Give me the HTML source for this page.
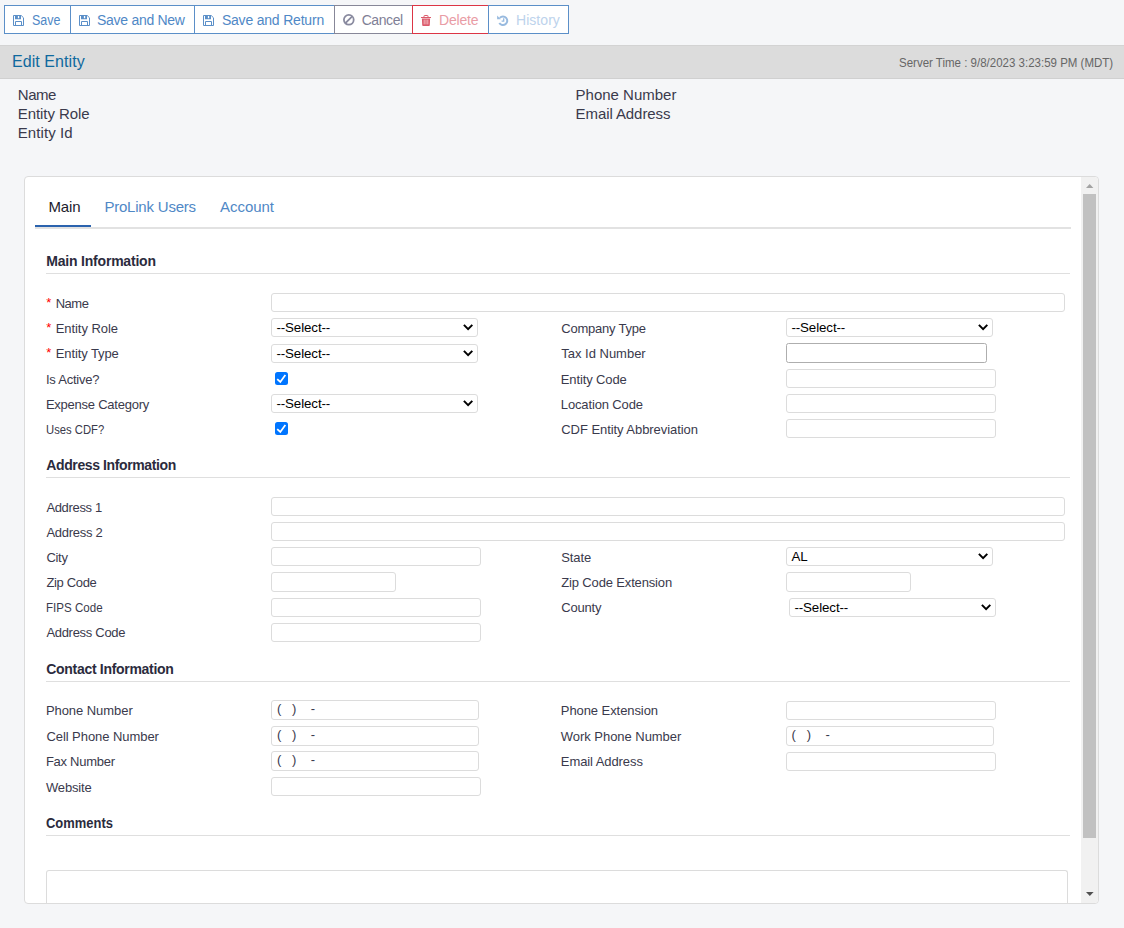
<!DOCTYPE html>
<html><head><meta charset="utf-8"><title>Edit Entity</title>
<style>
html,body{margin:0;padding:0}
body{width:1124px;height:928px;position:relative;overflow:hidden;background:#f5f6f8;font-family:"Liberation Sans",sans-serif;}
.t{position:absolute;white-space:pre;font-family:"Liberation Sans",sans-serif;}
.abs{position:absolute;box-sizing:border-box;}
.btn{position:absolute;top:5px;height:29px;box-sizing:border-box;background:#fff;border:1px solid #5b8fc8;}
.bar{position:absolute;left:0;top:45px;width:1124px;height:34px;background:#dcdcdc;border-bottom:1px solid #d0d0d0;border-top:1px solid #d3d3d3;box-sizing:border-box;}
.panel{position:absolute;left:24px;top:176px;width:1075px;height:728px;box-sizing:border-box;background:#fff;border:1px solid #dcdcdc;border-radius:4px;overflow:hidden;}
.in{position:absolute;box-sizing:border-box;background:#fff;border:1px solid #dcdcdc;border-radius:3px;}
.hr{position:absolute;left:46px;width:1024px;height:1px;background:#dfdfdf;}
div.sel{position:absolute;box-sizing:border-box;height:19px;width:207px;background:#fff;border:1px solid #dcdcdc;border-radius:3px;}
div.sel span{position:absolute;left:4.4px;top:0.6px;font-size:13.333px;line-height:16px;color:#000;white-space:pre;letter-spacing:-0.1px;}
div.cb{position:absolute;width:13px;height:13px;background:#0075ff;border-radius:2.5px;}
.ph{position:absolute;white-space:pre;font-size:13px;line-height:17px;color:#3a3a4c;}
svg{position:absolute;overflow:visible}

</style></head>
<body>
<!-- toolbar -->
<div class="btn" style="left:4px;width:67px"></div>
<div class="btn" style="left:70px;width:125px"></div>
<div class="btn" style="left:194px;width:141px"></div>
<div class="btn" style="left:334px;width:79px;border-color:#878798"></div>
<div class="btn" style="left:412px;width:77px;border-color:#dc3545"></div>
<div class="btn" style="left:488px;width:81px"></div>
<!-- icons -->
<svg class="ic-save" style="left:13px;top:15px" width="11" height="11" viewBox="0 0 11 11"><path d="M0.5 0.5H8.2L10.5 2.8V10.5H0.5Z" fill="none" stroke="#5b8fc8"/><path d="M2 0.5H8V4.2H2Z M4.9 1.1V3.3H6.2V1.1Z" fill="#5b8fc8" fill-rule="evenodd"/><path d="M2.5 10.5V6.5H8.5V10.5" fill="none" stroke="#5b8fc8"/></svg>
<svg class="ic-save" style="left:79px;top:15px" width="11" height="11" viewBox="0 0 11 11"><path d="M0.5 0.5H8.2L10.5 2.8V10.5H0.5Z" fill="none" stroke="#5b8fc8"/><path d="M2 0.5H8V4.2H2Z M4.9 1.1V3.3H6.2V1.1Z" fill="#5b8fc8" fill-rule="evenodd"/><path d="M2.5 10.5V6.5H8.5V10.5" fill="none" stroke="#5b8fc8"/></svg>
<svg class="ic-save" style="left:203px;top:15px" width="11" height="11" viewBox="0 0 11 11"><path d="M0.5 0.5H8.2L10.5 2.8V10.5H0.5Z" fill="none" stroke="#5b8fc8"/><path d="M2 0.5H8V4.2H2Z M4.9 1.1V3.3H6.2V1.1Z" fill="#5b8fc8" fill-rule="evenodd"/><path d="M2.5 10.5V6.5H8.5V10.5" fill="none" stroke="#5b8fc8"/></svg>
<svg style="left:343px;top:14.4px" width="11.6" height="11.6" viewBox="0 0 11.6 11.6"><circle cx="5.8" cy="5.8" r="4.9" fill="none" stroke="#898a9f" stroke-width="1.8"/><path d="M9.2 2.4L2.4 9.2" stroke="#898a9f" stroke-width="1.8"/></svg>
<svg style="left:421px;top:14.8px" width="10" height="11.2" viewBox="0 0 10 11.2"><path d="M3 2.2V1.1Q3 0.5 3.6 0.5H6.4Q7 0.5 7 1.1V2.2" fill="none" stroke="#db5a6b" stroke-width="1"/><path d="M0 1.9H10V3.1H0Z M0.9 3.5H9.1L8.8 10.3Q8.75 11.1 7.9 11.1H2.1Q1.25 11.1 1.2 10.3Z" fill="#db5a6b"/><path d="M3.2 4.6V9.4M5 4.6V9.4M6.8 4.6V9.4" stroke="#f6c9ce" stroke-width="0.85"/></svg>
<svg style="left:496.8px;top:14.8px" width="11.4" height="11" viewBox="0 0 11.4 11"><path d="M2.8 2.8A4.3 4.3 0 1 1 2.3 7.9" fill="none" stroke="#98badf" stroke-width="2"/><path d="M0.1 0.5V4.2H3.8Z" fill="#98badf"/><path d="M6.7 3.2V6.2H4.6" fill="none" stroke="#98badf" stroke-width="1.3"/></svg>
<!-- title bar -->
<div class="bar"></div>
<!-- panel -->
<div class="panel"></div>
<!-- scrollbar -->
<div class="abs" style="left:1081px;top:177px;width:17px;height:726px;background:#f1f1f1;border-radius:0 4px 4px 0"></div>
<div class="abs" style="left:1083px;top:194px;width:13px;height:644px;background:#c1c1c1"></div>
<svg style="left:1086px;top:184px" width="7.4" height="4" viewBox="0 0 8 4" preserveAspectRatio="none"><path d="M0 4L4 0L8 4Z" fill="#a3a3a3"/></svg>
<svg style="left:1085.8px;top:892px" width="7.6" height="4" viewBox="0 0 8 4" preserveAspectRatio="none"><path d="M0 0L4 4L8 0Z" fill="#505050"/></svg>
<!-- tabs -->
<div class="abs" style="left:35px;top:227px;width:1036px;height:2px;background:#e2e2e2"></div>
<div class="abs" style="left:35px;top:225px;width:56px;height:2px;background:#2b63ae"></div>
<!-- section rules -->
<div class="hr" style="top:273px"></div>
<div class="hr" style="top:477px"></div>
<div class="hr" style="top:681px"></div>
<div class="hr" style="top:835px"></div>
<!-- main inputs -->
<div class="in" style="left:271px;top:293px;width:794px;height:19px"></div>
<div class="sel" style="left:271px;top:318px"><span>--Select--</span><svg style="left:190.7px;top:5px" width="10" height="6" viewBox="0 0 10 6"><path d="M0.9 0.9L5.1 5.1L9.3 0.9" fill="none" stroke="#000" stroke-width="2"/></svg></div>
<div class="sel" style="left:271px;top:344px"><span>--Select--</span><svg style="left:190.7px;top:5px" width="10" height="6" viewBox="0 0 10 6"><path d="M0.9 0.9L5.1 5.1L9.3 0.9" fill="none" stroke="#000" stroke-width="2"/></svg></div>
<div class="cb" style="left:275px;top:372px"><svg style="left:0;top:0" width="13" height="13" viewBox="0 0 13 13"><path d="M2.2 7.15L5.3 9.95L10.35 2.9" fill="none" stroke="#fff" stroke-width="1.75"/></svg></div>
<div class="sel" style="left:271px;top:394px"><span>--Select--</span><svg style="left:190.7px;top:5px" width="10" height="6" viewBox="0 0 10 6"><path d="M0.9 0.9L5.1 5.1L9.3 0.9" fill="none" stroke="#000" stroke-width="2"/></svg></div>
<div class="cb" style="left:275px;top:422px"><svg style="left:0;top:0" width="13" height="13" viewBox="0 0 13 13"><path d="M2.2 7.15L5.3 9.95L10.35 2.9" fill="none" stroke="#fff" stroke-width="1.75"/></svg></div>
<div class="sel" style="left:786px;top:318px"><span>--Select--</span><svg style="left:190.7px;top:5px" width="10" height="6" viewBox="0 0 10 6"><path d="M0.9 0.9L5.1 5.1L9.3 0.9" fill="none" stroke="#000" stroke-width="2"/></svg></div>
<div class="in" style="left:786px;top:343px;width:201px;height:20px;border-color:#aeaeae;border-radius:2.5px"></div>
<div class="in" style="left:786px;top:369px;width:210px;height:19px"></div>
<div class="in" style="left:786px;top:394px;width:210px;height:19px"></div>
<div class="in" style="left:786px;top:419px;width:210px;height:19px"></div>
<!-- address inputs -->
<div class="in" style="left:271px;top:497px;width:794px;height:19px"></div>
<div class="in" style="left:271px;top:522px;width:794px;height:19px"></div>
<div class="in" style="left:271px;top:547px;width:210px;height:19px"></div>
<div class="in" style="left:271px;top:572px;width:125px;height:20px"></div>
<div class="in" style="left:271px;top:598px;width:210px;height:19px"></div>
<div class="in" style="left:271px;top:623px;width:210px;height:19px"></div>
<div class="sel" style="left:786px;top:547px"><span>AL</span><svg style="left:190.7px;top:5px" width="10" height="6" viewBox="0 0 10 6"><path d="M0.9 0.9L5.1 5.1L9.3 0.9" fill="none" stroke="#000" stroke-width="2"/></svg></div>
<div class="in" style="left:786px;top:572px;width:125px;height:20px"></div>
<div class="sel" style="left:789px;top:598px"><span>--Select--</span><svg style="left:190.7px;top:5px" width="10" height="6" viewBox="0 0 10 6"><path d="M0.9 0.9L5.1 5.1L9.3 0.9" fill="none" stroke="#000" stroke-width="2"/></svg></div>
<!-- contact inputs -->
<div class="in" style="left:271px;top:700px;width:208px;height:20px"></div>
<div class="in" style="left:271px;top:726px;width:208px;height:20px"></div>
<div class="in" style="left:271px;top:751px;width:208px;height:20px"></div>
<div class="in" style="left:271px;top:777px;width:210px;height:19px"></div>
<div class="in" style="left:786px;top:701px;width:210px;height:19px"></div>
<div class="in" style="left:786px;top:726px;width:208px;height:20px"></div>
<div class="in" style="left:786px;top:752px;width:210px;height:19px"></div>
<span class="ph" style="left:276.9px;top:699.8px">(   )    -    </span>
<span class="ph" style="left:276.9px;top:725.8px">(   )    -    </span>
<span class="ph" style="left:276.9px;top:750.8px">(   )    -    </span>
<span class="ph" style="left:791.5px;top:725.8px">(   )    -    </span>
<!-- comments -->
<div class="in" style="left:46px;top:870px;width:1022px;height:33px;border-bottom:none;border-radius:3px 3px 0 0"></div>

<span class='t ' style='left:31.5px;top:11.45px;font-size:14px;line-height:18px;color:#4f88c6;transform:scaleX(0.8897);transform-origin:0 0;'>Save</span>
<span class='t ' style='left:97.0px;top:11.45px;font-size:14px;line-height:18px;color:#4f88c6;letter-spacing:-0.280px;'>Save and New</span>
<span class='t ' style='left:221.9px;top:11.45px;font-size:14px;line-height:18px;color:#4f88c6;letter-spacing:-0.199px;'>Save and Return</span>
<span class='t ' style='left:361.7px;top:11.45px;font-size:14px;line-height:18px;color:#7f8096;letter-spacing:-0.432px;'>Cancel</span>
<span class='t ' style='left:439.0px;top:11.45px;font-size:14px;line-height:18px;color:#e99ca5;letter-spacing:-0.195px;'>Delete</span>
<span class='t ' style='left:516.0px;top:11.45px;font-size:14px;line-height:18px;color:#bdd3ec;letter-spacing:0.048px;'>History</span>
<span class='t ' style='left:12.1px;top:51.06px;font-size:16px;line-height:21px;color:#0f699e;letter-spacing:0.052px;'>Edit Entity</span>
<span class='t ' style='left:898.9px;top:54.30px;font-size:13px;line-height:17px;color:#666666;transform:scaleX(0.8850);transform-origin:0 0;'>Server Time : 9/8/2023 3:23:59 PM (MDT)</span>
<span class='t ' style='left:17.8px;top:84.50px;font-size:15px;line-height:20px;color:#3a3a4c;letter-spacing:-0.454px;'>Name</span>
<span class='t ' style='left:17.8px;top:103.50px;font-size:15px;line-height:20px;color:#3a3a4c;letter-spacing:-0.077px;'>Entity Role</span>
<span class='t ' style='left:17.8px;top:122.50px;font-size:15px;line-height:20px;color:#3a3a4c;letter-spacing:0.066px;'>Entity Id</span>
<span class='t ' style='left:575.6px;top:84.50px;font-size:15px;line-height:20px;color:#3a3a4c;letter-spacing:-0.009px;'>Phone Number</span>
<span class='t ' style='left:575.6px;top:103.50px;font-size:15px;line-height:20px;color:#3a3a4c;letter-spacing:-0.083px;'>Email Address</span>
<span class='t ' style='left:48.4px;top:196.60px;font-size:15px;line-height:20px;color:#1c1c2c;letter-spacing:-0.129px;'>Main</span>
<span class='t ' style='left:104.4px;top:196.60px;font-size:15px;line-height:20px;color:#4f88c6;letter-spacing:-0.208px;'>ProLink Users</span>
<span class='t ' style='left:220.0px;top:196.60px;font-size:15px;line-height:20px;color:#4f88c6;letter-spacing:-0.029px;'>Account</span>
<span class='t ' style='left:46.3px;top:252.15px;font-size:14px;line-height:18px;font-weight:700;color:#2b2b3d;letter-spacing:-0.205px;'>Main Information</span>
<span class='t ' style='left:46.3px;top:456.15px;font-size:14px;line-height:18px;font-weight:700;color:#2b2b3d;letter-spacing:-0.390px;'>Address Information</span>
<span class='t ' style='left:46.3px;top:660.15px;font-size:14px;line-height:18px;font-weight:700;color:#2b2b3d;letter-spacing:-0.305px;'>Contact Information</span>
<span class='t ' style='left:46.3px;top:814.15px;font-size:14px;line-height:18px;font-weight:700;color:#2b2b3d;transform:scaleX(0.9246);transform-origin:0 0;'>Comments</span>
<span class='t ' style='left:46.2px;top:294.10px;font-size:13px;line-height:17px;color:#ff0000;'>*</span>
<span class='t ' style='left:46.2px;top:319.10px;font-size:13px;line-height:17px;color:#ff0000;'>*</span>
<span class='t ' style='left:46.2px;top:343.70px;font-size:13px;line-height:17px;color:#ff0000;'>*</span>
<span class='t ' style='left:55.7px;top:295.00px;font-size:13px;line-height:17px;color:#3a3a4c;letter-spacing:-0.472px;'>Name</span>
<span class='t ' style='left:55.7px;top:320.00px;font-size:13px;line-height:17px;color:#3a3a4c;letter-spacing:-0.061px;'>Entity Role</span>
<span class='t ' style='left:55.7px;top:344.60px;font-size:13px;line-height:17px;color:#3a3a4c;letter-spacing:-0.098px;'>Entity Type</span>
<span class='t ' style='left:45.9px;top:370.60px;font-size:13px;line-height:17px;color:#3a3a4c;letter-spacing:-0.224px;'>Is Active?</span>
<span class='t ' style='left:45.9px;top:395.70px;font-size:13px;line-height:17px;color:#3a3a4c;letter-spacing:-0.235px;'>Expense Category</span>
<span class='t ' style='left:45.9px;top:420.60px;font-size:13px;line-height:17px;color:#3a3a4c;transform:scaleX(0.8662);transform-origin:0 0;'>Uses CDF?</span>
<span class='t ' style='left:561.3px;top:320.00px;font-size:13px;line-height:17px;color:#3a3a4c;letter-spacing:-0.234px;'>Company Type</span>
<span class='t ' style='left:561.3px;top:344.60px;font-size:13px;line-height:17px;color:#3a3a4c;letter-spacing:-0.011px;'>Tax Id Number</span>
<span class='t ' style='left:560.8px;top:370.60px;font-size:13px;line-height:17px;color:#3a3a4c;letter-spacing:-0.128px;'>Entity Code</span>
<span class='t ' style='left:560.8px;top:395.70px;font-size:13px;line-height:17px;color:#3a3a4c;letter-spacing:-0.134px;'>Location Code</span>
<span class='t ' style='left:561.3px;top:420.60px;font-size:13px;line-height:17px;color:#3a3a4c;letter-spacing:-0.062px;'>CDF Entity Abbreviation</span>
<span class='t ' style='left:46.4px;top:499.00px;font-size:13px;line-height:17px;color:#3a3a4c;letter-spacing:-0.339px;'>Address 1</span>
<span class='t ' style='left:46.4px;top:523.80px;font-size:13px;line-height:17px;color:#3a3a4c;letter-spacing:-0.272px;'>Address 2</span>
<span class='t ' style='left:46.4px;top:548.70px;font-size:13px;line-height:17px;color:#3a3a4c;letter-spacing:-0.298px;'>City</span>
<span class='t ' style='left:46.4px;top:574.00px;font-size:13px;line-height:17px;color:#3a3a4c;letter-spacing:-0.331px;'>Zip Code</span>
<span class='t ' style='left:45.9px;top:598.70px;font-size:13px;line-height:17px;color:#3a3a4c;transform:scaleX(0.8900);transform-origin:0 0;'>FIPS Code</span>
<span class='t ' style='left:46.4px;top:623.60px;font-size:13px;line-height:17px;color:#3a3a4c;letter-spacing:-0.299px;'>Address Code</span>
<span class='t ' style='left:561.3px;top:548.70px;font-size:13px;line-height:17px;color:#3a3a4c;letter-spacing:-0.132px;'>State</span>
<span class='t ' style='left:561.3px;top:574.00px;font-size:13px;line-height:17px;color:#3a3a4c;letter-spacing:-0.153px;'>Zip Code Extension</span>
<span class='t ' style='left:561.3px;top:598.70px;font-size:13px;line-height:17px;color:#3a3a4c;letter-spacing:-0.217px;'>County</span>
<span class='t ' style='left:45.9px;top:701.80px;font-size:13px;line-height:17px;color:#3a3a4c;letter-spacing:-0.054px;'>Phone Number</span>
<span class='t ' style='left:46.4px;top:727.70px;font-size:13px;line-height:17px;color:#3a3a4c;letter-spacing:-0.056px;'>Cell Phone Number</span>
<span class='t ' style='left:45.9px;top:752.70px;font-size:13px;line-height:17px;color:#3a3a4c;letter-spacing:-0.263px;'>Fax Number</span>
<span class='t ' style='left:45.9px;top:778.90px;font-size:13px;line-height:17px;color:#3a3a4c;letter-spacing:-0.133px;'>Website</span>
<span class='t ' style='left:560.8px;top:701.80px;font-size:13px;line-height:17px;color:#3a3a4c;letter-spacing:-0.073px;'>Phone Extension</span>
<span class='t ' style='left:560.8px;top:727.70px;font-size:13px;line-height:17px;color:#3a3a4c;letter-spacing:-0.039px;'>Work Phone Number</span>
<span class='t ' style='left:560.8px;top:752.70px;font-size:13px;line-height:17px;color:#3a3a4c;letter-spacing:-0.084px;'>Email Address</span>
</body></html>
